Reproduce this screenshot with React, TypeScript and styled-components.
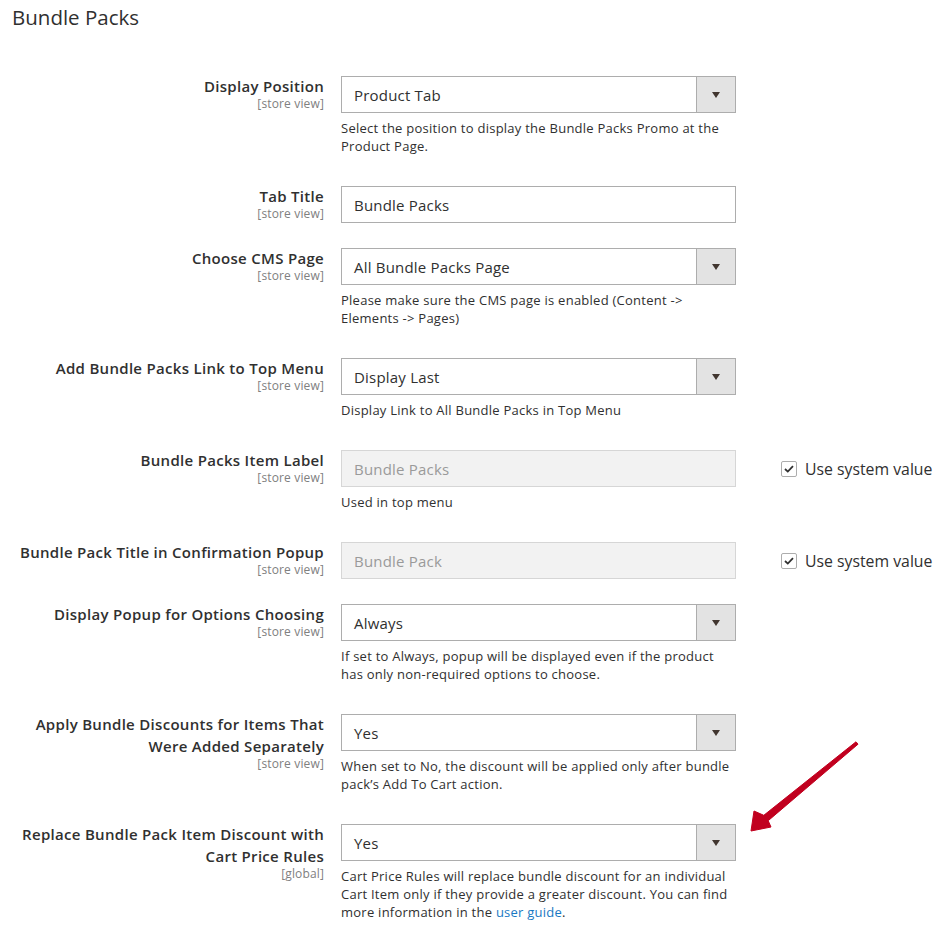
import styled, { createGlobalStyle } from 'styled-components'

const GlobalStyle = createGlobalStyle`
  body {
    margin: 0;
    background: #ffffff;
    font-family: 'Open Sans', 'Liberation Sans', sans-serif;
    color: #303030;
  }
`

const Page = styled.div`
  position: relative;
  width: 940px;
  height: 925px;
  overflow: hidden;
  padding-top: 5px;
  box-sizing: border-box;
`

const Title = styled.h2`
  margin: 0 0 47px 12px;
  font-size: 20.5px;
  line-height: 24px;
  font-weight: 400;
  color: #303030;
`

const Row = styled.div`
  display: grid;
  grid-template-columns: 324px 395px 1fr;
  column-gap: 17px;
  margin-bottom: 25px;
`

const LabelCell = styled.div`
  text-align: right;
  margin-top: -1px;
`

const LabelText = styled.div`
  font-size: 15px;
  letter-spacing: 0.3px;
  line-height: 22px;
  font-weight: 600;
  color: #303030;
`

const Scope = styled.div`
  font-size: 12px;
  letter-spacing: 0.15px;
  line-height: 13px;
  color: #808080;
`

const Control = styled.div`
  display: flex;
  flex-direction: column;
`

const SelectBox = styled.div`
  height: 37px;
  box-sizing: border-box;
  border: 1px solid #adadad;
  display: flex;
  align-items: stretch;
  background: #ffffff;
`

const SelectValue = styled.div`
  flex: 1;
  display: flex;
  align-items: center;
  padding-left: 12px;
  font-size: 15px;
  letter-spacing: 0.2px;
  color: #303030;
`

const ArrowBox = styled.div`
  width: 38px;
  border-left: 1px solid #adadad;
  background: #e3e3e3;
  display: flex;
  align-items: center;
  justify-content: center;

  &::after {
    content: '';
    width: 0;
    height: 0;
    border-left: 4.5px solid transparent;
    border-right: 4.5px solid transparent;
    border-top: 6px solid #41362f;
    margin-top: 1px;
  }
`

const TextInput = styled.div<{ $disabled?: boolean }>`
  height: 37px;
  box-sizing: border-box;
  border: 1px solid ${({ $disabled }) => ($disabled ? '#d6d6d6' : '#adadad')};
  background: ${({ $disabled }) => ($disabled ? '#f2f2f2' : '#ffffff')};
  color: ${({ $disabled }) => ($disabled ? '#9a9a9a' : '#303030')};
  display: flex;
  align-items: center;
  padding-left: 12px;
  font-size: 15px;
  letter-spacing: 0.2px;
`

const Note = styled.div`
  margin: 6px 0;
  font-size: 13px;
  letter-spacing: 0.25px;
  line-height: 18px;
  color: #303030;
`

const Link = styled.a`
  color: #1979c3;
  text-decoration: none;
`

const SystemValue = styled.label`
  display: flex;
  align-items: center;
  gap: 8px;
  height: 37px;
  margin-left: 28px;
  font-size: 15.8px;
  color: #303030;
  white-space: nowrap;
`

const CheckBox = styled.span`
  width: 16px;
  height: 16px;
  box-sizing: border-box;
  border: 1px solid #adadad;
  border-radius: 2px;
  background: #ffffff;
  display: flex;
  align-items: center;
  justify-content: center;
`

const Pointer = styled.svg`
  position: absolute;
  left: 0;
  top: 0;
  pointer-events: none;
`

type Field = {
  label: string[]
  scope: string
  kind: 'select' | 'text' | 'disabled'
  value: string
  note?: React.ReactNode
  system?: boolean
}

const fields: Field[] = [
  {
    label: ['Display Position'],
    scope: '[store view]',
    kind: 'select',
    value: 'Product Tab',
    note: 'Select the position to display the Bundle Packs Promo at the Product Page.',
  },
  { label: ['Tab Title'], scope: '[store view]', kind: 'text', value: 'Bundle Packs' },
  {
    label: ['Choose CMS Page'],
    scope: '[store view]',
    kind: 'select',
    value: 'All Bundle Packs Page',
    note: 'Please make sure the CMS page is enabled (Content -> Elements -> Pages)',
  },
  {
    label: ['Add Bundle Packs Link to Top Menu'],
    scope: '[store view]',
    kind: 'select',
    value: 'Display Last',
    note: 'Display Link to All Bundle Packs in Top Menu',
  },
  {
    label: ['Bundle Packs Item Label'],
    scope: '[store view]',
    kind: 'disabled',
    value: 'Bundle Packs',
    note: 'Used in top menu',
    system: true,
  },
  {
    label: ['Bundle Pack Title in Confirmation Popup'],
    scope: '[store view]',
    kind: 'disabled',
    value: 'Bundle Pack',
    system: true,
  },
  {
    label: ['Display Popup for Options Choosing'],
    scope: '[store view]',
    kind: 'select',
    value: 'Always',
    note: 'If set to Always, popup will be displayed even if the product has only non-required options to choose.',
  },
  {
    label: ['Apply Bundle Discounts for Items That', 'Were Added Separately'],
    scope: '[store view]',
    kind: 'select',
    value: 'Yes',
    note: 'When set to No, the discount will be applied only after bundle pack’s Add To Cart action.',
  },
  {
    label: ['Replace Bundle Pack Item Discount with', 'Cart Price Rules'],
    scope: '[global]',
    kind: 'select',
    value: 'Yes',
    note: (
      <>
        Cart Price Rules will replace bundle discount for an individual Cart Item only if they provide a greater
        discount. You can find more information in the <Link href="#">user guide</Link>.
      </>
    ),
  },
]

function FieldControl({ field }: { field: Field }) {
  if (field.kind === 'select') {
    return (
      <SelectBox>
        <SelectValue>{field.value}</SelectValue>
        <ArrowBox />
      </SelectBox>
    )
  }
  return <TextInput $disabled={field.kind === 'disabled'}>{field.value}</TextInput>
}

export default function App() {
  return (
    <Page>
      <GlobalStyle />
      <Title>Bundle Packs</Title>
      {fields.map((field) => (
        <Row key={field.label.join(' ')}>
          <LabelCell>
            {field.label.map((line) => (
              <LabelText key={line}>{line}</LabelText>
            ))}
            <Scope>{field.scope}</Scope>
          </LabelCell>
          <Control>
            <FieldControl field={field} />
            {field.note && <Note>{field.note}</Note>}
          </Control>
          {field.system && (
            <SystemValue>
              <CheckBox>
                <svg width="10" height="8" viewBox="0 0 10 8">
                  <path d="M1 4 L3.8 6.6 L9 1.2" fill="none" stroke="#303030" strokeWidth="1.8" />
                </svg>
              </CheckBox>
              Use system value
            </SystemValue>
          )}
        </Row>
      ))}
      <Pointer width="940" height="925" viewBox="0 0 940 925">
        <polygon
          points="751,831 754,811 763.8,815.3 856,741.8 858,744.2 768.2,820.7 771,827"
          fill="#c1001f"
          stroke="#c1001f"
          strokeWidth="1"
          strokeLinejoin="round"
        />
      </Pointer>
    </Page>
  )
}
